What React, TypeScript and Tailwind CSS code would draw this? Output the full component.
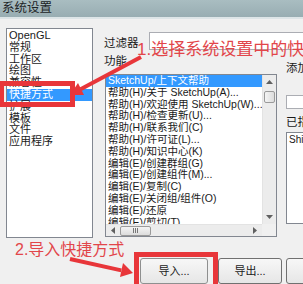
import React from "react";

const leftItems = ["OpenGL", "常规", "工作区", "绘图", "兼容性", "快捷方式", "扩展", "模板", "文件", "应用程序"];
const midItems = [
  "SketchUp/上下文帮助",
  "帮助(H)/关于 SketchUp(A)...",
  "帮助(H)/欢迎使用 SketchUp(W)...",
  "帮助(H)/检查更新(U)...",
  "帮助(H)/联系我们(C)",
  "帮助(H)/许可证(L)...",
  "帮助(H)/知识中心(K)",
  "编辑(E)/创建群组(G)",
  "编辑(E)/创建组件(M)...",
  "编辑(E)/复制(C)",
  "编辑(E)/关闭组/组件(O)",
  "编辑(E)/还原",
  "编辑(E)/剪切(T)",
];

function ArrowUp() {
  return (
    <svg width="7" height="4" viewBox="0 0 7 4"><path d="M0 4 L3.5 0 L7 4 Z" fill="#606060" /></svg>
  );
}
function ArrowDown() {
  return (
    <svg width="7" height="4" viewBox="0 0 7 4"><path d="M0 0 L3.5 4 L7 0 Z" fill="#606060" /></svg>
  );
}
function ArrowLeft() {
  return (
    <svg width="4" height="7" viewBox="0 0 4 7"><path d="M4 0 L0 3.5 L4 7 Z" fill="#606060" /></svg>
  );
}
function ArrowRight() {
  return (
    <svg width="4" height="7" viewBox="0 0 4 7"><path d="M0 0 L4 3.5 L0 7 Z" fill="#606060" /></svg>
  );
}

export default function App() {
  return (
    <div className="relative w-[303px] h-[284px] overflow-hidden bg-[#f0f0f0] font-['Liberation_Sans','Noto_Sans_CJK_SC',sans-serif] text-[#1a1a1a]">
      {/* title bar */}
      <div className="h-[17px] bg-[linear-gradient(#a9bdc1,#98adb2)] pl-[2px] text-[12.5px] leading-[17px] text-[#1c2426]">
        系统设置
      </div>
      <div className="h-[2px] bg-[#dde5e7]" />

      {/* body */}
      <div className="flex pl-[6px] pt-[9px]">
        {/* left list */}
        <div className="w-[87px] shrink-0 h-[210px] border border-[#828790] bg-white pt-[1px] flex flex-col">
          {leftItems.map((t) => (
            <div
              key={t}
              className={
                "h-[11.8px] shrink-0 pl-[2px] text-[11px] leading-[11.8px] whitespace-nowrap " +
                (t === "快捷方式" ? "bg-[#3399ff] text-white" : "")
              }
            >
              {t}
            </div>
          ))}
        </div>

        {/* right column */}
        <div className="ml-[11px] w-[215px] shrink-0 flex flex-col">
          <div className="mt-[4px] h-[18px] flex items-center">
            <div className="w-[45px] shrink-0 text-[11.5px] leading-[12px] pt-[3px]">过滤器</div>
            <div className="w-[165px] shrink-0 h-[18px] border border-[#abadb3] bg-white" />
          </div>

          <div className="flex">
            {/* middle column */}
            <div className="w-[173px] shrink-0 flex flex-col">
              <div className="h-[24px] pt-[5px] text-[11.5px] leading-[12px]">功能</div>
              <div className="ml-[1px] w-[172px] h-[163px] border border-[#828790] bg-white flex flex-col">
                <div className="flex h-[149px]">
                  <div className="w-[156px] shrink-0 overflow-hidden flex flex-col">
                    {midItems.map((t, i) => (
                      <div
                        key={t}
                        className={
                          "h-[11.8px] shrink-0 pl-[2px] text-[10.5px] leading-[11.8px] whitespace-nowrap " +
                          (i === 0 ? "bg-[#3399ff] text-white" : "")
                        }
                      >
                        {t}
                      </div>
                    ))}
                  </div>
                  {/* vertical scrollbar */}
                  <div className="w-[14px] shrink-0 bg-[#ececec] border-l border-[#e3e3e3] flex flex-col">
                    <div className="h-[14px] flex items-center justify-center">
                      <ArrowUp />
                    </div>
                    <div className="mt-[2px] mx-[1px] h-[12px] rounded-[2px] border border-[#9a9a9a] bg-[linear-gradient(90deg,#f4f4f4,#dcdcdc)]" />
                    <div className="flex-1" />
                    <div className="h-[14px] flex items-center justify-center">
                      <ArrowDown />
                    </div>
                  </div>
                </div>
                <div className="flex h-[12px]">
                  {/* horizontal scrollbar */}
                  <div className="w-[156px] shrink-0 bg-[#ececec] border-t border-[#e3e3e3] flex items-center">
                    <div className="w-[14px] flex items-center justify-center">
                      <ArrowLeft />
                    </div>
                    <div className="w-[31px] h-[10px] rounded-[2px] border border-[#9a9a9a] bg-[linear-gradient(#f4f4f4,#dcdcdc)] flex items-center justify-center gap-[1px]">
                      <div className="w-[1px] h-[5px] bg-[#777]" />
                      <div className="w-[1px] h-[5px] bg-[#777]" />
                      <div className="w-[1px] h-[5px] bg-[#777]" />
                    </div>
                    <div className="flex-1" />
                    <div className="w-[14px] flex items-center justify-center">
                      <ArrowRight />
                    </div>
                  </div>
                  <div className="w-[14px] shrink-0 bg-[#f0f0f0]" />
                </div>
              </div>
            </div>

            {/* right panel */}
            <div className="ml-[9px] w-[40px] shrink-0 flex flex-col">
              <div className="mt-[12px] h-[12px] text-[11.5px] leading-[12px] whitespace-nowrap">添加快捷方式</div>
              <div className="mt-[21px] h-[14px] w-[40px] border border-[#abadb3] bg-white" />
              <div className="mt-[7px] h-[12px] text-[11.5px] leading-[12px] whitespace-nowrap">已指定到</div>
              <div className="mt-[4px] h-[92px] w-[40px] border border-[#828790] bg-white pl-[2px] pt-[1px] text-[10px] leading-[12px] whitespace-nowrap">
                Shift+F1
              </div>
            </div>
          </div>

          {/* buttons */}
          <div className="mt-[21px] flex">
            <div className="ml-[36px] shrink-0 w-[68px] h-[26px] rounded-[3px] border border-[#8e8f8f] bg-[linear-gradient(#f7f7f7,#e6e6e6)] flex items-center justify-center text-[11px] pt-[1px]">
              导入...
            </div>
            <div className="ml-[10px] shrink-0 w-[64px] h-[26px] rounded-[3px] border border-[#707070] bg-[linear-gradient(#f7f7f7,#e6e6e6)] flex items-center justify-center text-[11px] pt-[1px]">
              导出...
            </div>
            <div className="ml-[4px] shrink-0 w-[60px] h-[26px] rounded-[3px] border border-[#707070] bg-[linear-gradient(#f7f7f7,#e6e6e6)]" />
          </div>
        </div>
      </div>

      {/* annotations */}
      <svg className="absolute left-0 top-0 pointer-events-none" width="303" height="284" viewBox="0 0 303 284">
        <rect x="1.5" y="83.5" width="71" height="21" fill="none" stroke="#e8363a" strokeWidth="5" />
        <line x1="141" y1="57" x2="80.6" y2="89.3" stroke="#e8363a" strokeWidth="4" />
        <polygon points="70,95 84,95 78,83" fill="#e8363a" />
        <rect x="136.5" y="254.5" width="79" height="40" fill="none" stroke="#e8363a" strokeWidth="5" />
        <line x1="70" y1="259" x2="121.3" y2="270.4" stroke="#e8363a" strokeWidth="4" />
        <polygon points="133,273 120,277 123,263" fill="#e8363a" />
      </svg>
      <div className="absolute left-[137px] top-[41px] text-[17px] leading-[17px] text-[#e2464a] whitespace-nowrap">
        1.选择系统设置中的快捷方式
      </div>
      <div className="absolute left-[15px] top-[242px] text-[16px] leading-[16px] text-[#e2464a] whitespace-nowrap">
        2.导入快捷方式
      </div>
    </div>
  );
}
